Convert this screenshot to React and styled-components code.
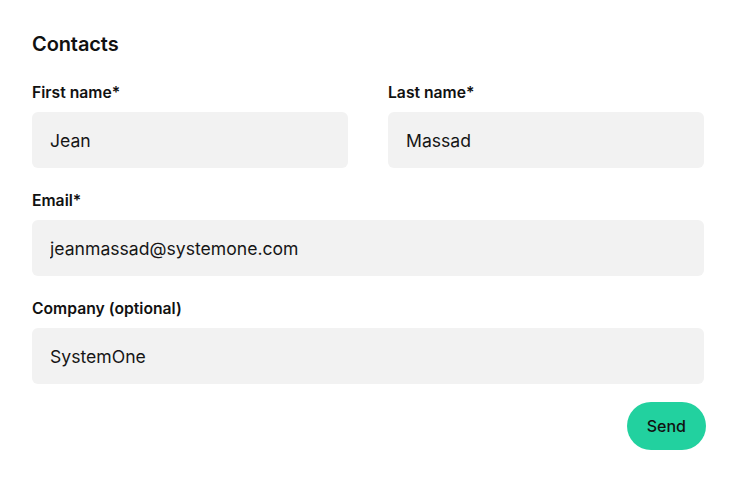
import React from "react";
import styled, { createGlobalStyle } from "styled-components";

const Global = createGlobalStyle`
  html, body { margin: 0; padding: 0; background: #ffffff; }
  body { font-family: Inter, "Noto Sans", sans-serif; color: #111111; }
  * { box-sizing: border-box; }
`;

const Form = styled.form`
  width: 736px;
  padding: 30px 30px 0 32px;
  display: flex;
  flex-direction: column;
`;

const Title = styled.h2`
  margin: 0 0 22px;
  font-size: 20px;
  line-height: 28px;
  font-weight: 600;
  letter-spacing: -0.1px;
`;

const Row = styled.div`
  display: grid;
  grid-template-columns: ${(p) => (p.$cols === 2 ? "1fr 1fr" : "1fr")};
  column-gap: 40px;
  width: 672px;
  margin-bottom: 20px;
`;

const Field = styled.label`
  display: flex;
  flex-direction: column;
  gap: 7px;
`;

const LabelText = styled.span`
  font-size: 15.7px;
  line-height: 25px;
  font-weight: 600;
`;

const Input = styled.input`
  height: 56px;
  border: none;
  border-radius: 6px;
  background: #f2f2f2;
  padding: 0 18px;
  font-family: inherit;
  font-size: 17.6px;
  color: #161616;
  outline: none;
  width: 100%;
`;

const Actions = styled.div`
  display: flex;
  justify-content: flex-end;
  width: 674px;
  margin-top: -2px;
`;

const SendButton = styled.button`
  height: 48px;
  padding: 0 20px;
  border: none;
  border-radius: 24px;
  background: #22d19f;
  color: #111111;
  font-family: inherit;
  font-size: 16px;
  font-weight: 500;
  cursor: pointer;
`;

function TextField({ label, value }) {
  return (
    <Field>
      <LabelText>{label}</LabelText>
      <Input defaultValue={value} />
    </Field>
  );
}

export default function App() {
  return (
    <>
      <Global />
      <Form onSubmit={(e) => e.preventDefault()}>
        <Title>Contacts</Title>
        <Row $cols={2}>
          <TextField label="First name*" value="Jean" />
          <TextField label="Last name*" value="Massad" />
        </Row>
        <Row>
          <TextField label="Email*" value="jeanmassad@systemone.com" />
        </Row>
        <Row>
          <TextField label="Company (optional)" value="SystemOne" />
        </Row>
        <Actions>
          <SendButton type="submit">Send</SendButton>
        </Actions>
      </Form>
    </>
  );
}
